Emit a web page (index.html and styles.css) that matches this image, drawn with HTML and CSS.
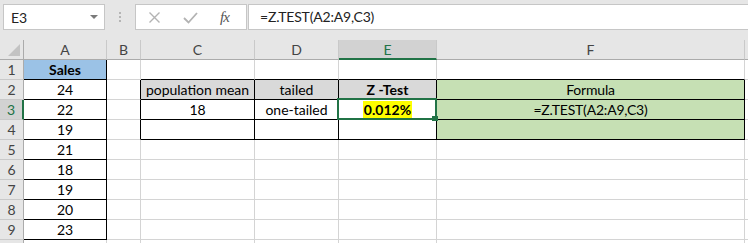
FILE: index.html
```html
<html lang="en">
  <head>
    <meta charset="utf-8">
    <link rel="stylesheet" href="styles.css">
  </head>
  <body>
    <div class="toolbar">
      <div class="name-box">
        <span>E3</span>
        <span class="caret"></span>
      </div>
      <div class="grip"><i></i><i></i><i></i></div>
      <div class="fx-box">
        <svg class="tool-icon" width="13" height="13" viewBox="0 0 13 13">
          <path d="M1.5 1.5 L11.5 11.5 M11.5 1.5 L1.5 11.5" stroke="#b3b3b3" stroke-width="1.4" fill="none"/>
        </svg>
        <svg class="tool-icon" width="15" height="13" viewBox="0 0 15 13">
          <path d="M1 7 L5.5 11.5 L14 2" stroke="#b3b3b3" stroke-width="1.8" fill="none"/>
        </svg>
        <span class="fx">fx</span>
      </div>
      <div class="formula">=Z.TEST(A2:A9,C3)</div>
    </div>

    <div class="sheet">
      <div class="corner"><span class="select-all"></span></div>
      <div class="ch">A</div>
      <div class="ch">B</div>
      <div class="ch">C</div>
      <div class="ch">D</div>
      <div class="ch on">E</div>
      <div class="ch">F</div>
      <div class="ch filler"></div>

      <div class="rh">1</div>
      <div class="c k blue bold">Sales</div>
      <div class="c"></div>
      <div class="c kb"></div>
      <div class="c kb"></div>
      <div class="c kb"></div>
      <div class="c kb"></div>
      <div class="c filler"></div>

      <div class="rh">2</div>
      <div class="c k">24</div>
      <div class="c kr"></div>
      <div class="c k grey">population mean</div>
      <div class="c k grey">tailed</div>
      <div class="c k grey bold">Z -Test</div>
      <div class="c k green">Formula</div>
      <div class="c filler"></div>

      <div class="rh on">3</div>
      <div class="c k">22</div>
      <div class="c kr"></div>
      <div class="c k">18</div>
      <div class="c k">one-tailed</div>
      <div class="c k sel bold"><span class="mark">0.012%</span><span class="handle"></span></div>
      <div class="c k green">=Z.TEST(A2:A9,C3)</div>
      <div class="c filler"></div>

      <div class="rh">4</div>
      <div class="c k">19</div>
      <div class="c kr"></div>
      <div class="c k"></div>
      <div class="c k"></div>
      <div class="c k"></div>
      <div class="c k green"></div>
      <div class="c filler"></div>

      <div class="rh">5</div>
      <div class="c k">21</div>
      <div class="c"></div><div class="c"></div><div class="c"></div><div class="c"></div><div class="c"></div>
      <div class="c filler"></div>

      <div class="rh">6</div>
      <div class="c k">18</div>
      <div class="c"></div><div class="c"></div><div class="c"></div><div class="c"></div><div class="c"></div>
      <div class="c filler"></div>

      <div class="rh">7</div>
      <div class="c k">19</div>
      <div class="c"></div><div class="c"></div><div class="c"></div><div class="c"></div><div class="c"></div>
      <div class="c filler"></div>

      <div class="rh">8</div>
      <div class="c k">20</div>
      <div class="c"></div><div class="c"></div><div class="c"></div><div class="c"></div><div class="c"></div>
      <div class="c filler"></div>

      <div class="rh">9</div>
      <div class="c k">23</div>
      <div class="c"></div><div class="c"></div><div class="c"></div><div class="c"></div><div class="c"></div>
      <div class="c filler"></div>

      <div class="rh"></div>
      <div class="c"></div><div class="c"></div><div class="c"></div><div class="c"></div><div class="c"></div><div class="c"></div>
      <div class="c filler"></div>
    </div>
  </body>
</html>
```

FILE: styles.css
```css
body {
  margin: 0;
  width: 748px;
  height: 243px;
  overflow: hidden;
  background-color: #fff;
  color: #000;
  font-family: Lato, "Liberation Sans", sans-serif;
  font-size: 14px;
}

/* formula bar */

.toolbar {
  display: flex;
  height: 40px;
  padding-top: 4px;
  box-sizing: border-box;
  background-color: #e6e6e6;
}

.name-box,
.fx-box,
.formula {
  height: 26px;
  box-sizing: border-box;
  border: 1px solid #c6c6c6;
  background-color: #fff;
}

.name-box {
  display: flex;
  align-items: center;
  width: 102px;
  margin-left: 3px;
  padding: 0 6px 0 7px;
  color: #222;
}

.caret {
  margin-left: auto;
  width: 0;
  height: 0;
  border-left: 4px solid transparent;
  border-right: 4px solid transparent;
  border-top: 4px solid #7a7a7a;
}

.grip {
  display: flex;
  flex-direction: column;
  align-items: center;
  justify-content: center;
  gap: 2px;
  width: 30px;
  height: 26px;
}

.grip i {
  width: 2px;
  height: 2px;
  background-color: #b5b5b5;
}

.fx-box {
  display: flex;
  align-items: center;
  width: 112px;
  padding-left: 12px;
}

.tool-icon {
  margin-right: 22px;
}

.fx {
  font-family: "Liberation Serif", serif;
  font-style: italic;
  font-size: 15px;
  color: #555;
  letter-spacing: -1px;
}

.formula {
  flex: 1;
  margin-left: 1px;
  border-right: 0;
  padding-left: 11px;
  line-height: 24px;
  color: #222;
  letter-spacing: -0.2px;
}

/* grid */

.sheet {
  display: grid;
  grid-template-columns: 24px 83px 34px 114px 84px 98px 308px 1fr;
  grid-auto-rows: 20px;
}

.sheet > div {
  box-sizing: border-box;
  border-right: 1px solid #d4d4d4;
  border-bottom: 1px solid #d4d4d4;
  text-align: center;
  white-space: nowrap;
}

.sheet .corner {
  position: relative;
  background-color: #e6e6e6;
  border-right-color: #ababab;
  border-bottom-color: #ababab;
}

.select-all {
  position: absolute;
  right: 3px;
  bottom: 3px;
  width: 0;
  height: 0;
  border-left: 12px solid transparent;
  border-bottom: 12px solid #c3c3c3;
}

.sheet .ch {
  background-color: #e6e6e6;
  color: #444;
  line-height: 20px;
  border-right-color: #c9c9c9;
  border-bottom-color: #ababab;
}

.sheet .ch.on {
  background-color: #d2d2d2;
  color: #217346;
  border-bottom: 2px solid #217346;
}

.sheet .rh {
  background-color: #e6e6e6;
  color: #444;
  padding-top: 1px;
  line-height: 18px;
  border-right-color: #ababab;
  border-bottom-color: #c9c9c9;
}

.sheet .rh.on {
  background-color: #d2d2d2;
  color: #217346;
  border-right: 2px solid #217346;
}

.c {
  padding-top: 1px;
  line-height: 18px;
}

.sheet .filler {
  border-right: 0;
}

.sheet .k {
  border-right-color: #000;
  border-bottom-color: #000;
}

.sheet .kr {
  border-right-color: #000;
}

.sheet .kb {
  border-bottom-color: #000;
}

.blue {
  background-color: #9bc2e6;
}

.grey {
  background-color: #d9d9d9;
}

.green {
  background-color: #c6e0b4;
  letter-spacing: -0.2px;
}

.bold {
  font-weight: bold;
}

.mark {
  background-color: #ffff00;
  padding: 0 1px;
}

.sel {
  position: relative;
}

.sel::before {
  content: "";
  position: absolute;
  top: -2px;
  left: -2px;
  right: -1px;
  bottom: -1px;
  border: 2px solid #217346;
  z-index: 1;
}

.handle {
  position: absolute;
  right: -2px;
  bottom: -2px;
  width: 6px;
  height: 5px;
  background-color: #217346;
  z-index: 2;
}
```
